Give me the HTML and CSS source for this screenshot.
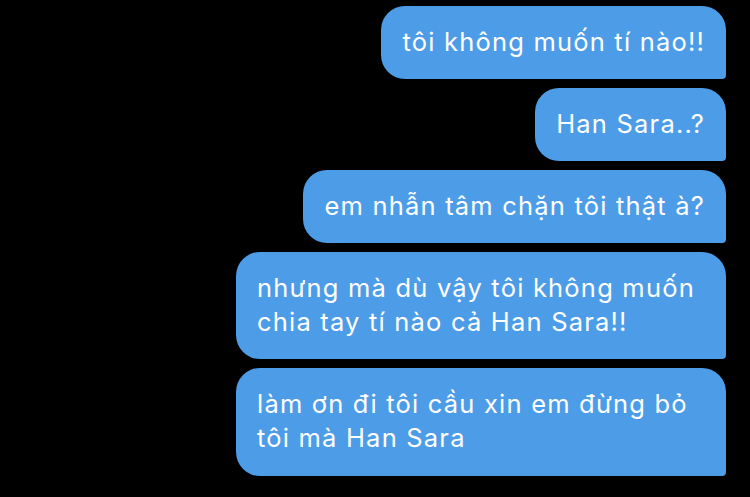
FILE: index.html
```html
<!DOCTYPE html>
<html lang="vi">
<head>
<meta charset="utf-8">
<link rel="stylesheet" href="styles.css">
</head>
<body>
<div class="thread">
  <div class="bubble">tôi không muốn tí nào!!</div>
  <div class="bubble">Han Sara..?</div>
  <div class="bubble">em nhẫn tâm chặn tôi thật à?</div>
  <div class="bubble">nhưng mà dù vậy tôi không muốn chia tay tí nào cả Han Sara!!</div>
  <div class="bubble">làm ơn đi tôi cầu xin em đừng bỏ tôi mà Han Sara</div>
</div>
</body>
</html>
```
FILE: styles.css
```css
html, body {
  margin: 0;
  padding: 0;
  background: #000;
}
body {
  width: 750px;
  height: 497px;
  overflow: hidden;
  font-family: Inter, "Noto Sans", sans-serif;
}
.thread {
  display: flex;
  flex-direction: column;
  align-items: flex-end;
  gap: 9px;
  padding: 6px 24px 0 0;
}
.bubble {
  box-sizing: border-box;
  max-width: 490px;
  padding: 19px 21px 20px 21px;
  background: #4d9ce8;
  color: #fff;
  font-size: 25.5px;
  letter-spacing: 1.2px;
  line-height: 34px;
  border-radius: 24px 24px 4px 24px;
}
.bubble:last-child {
  padding-bottom: 21px;
}
```
